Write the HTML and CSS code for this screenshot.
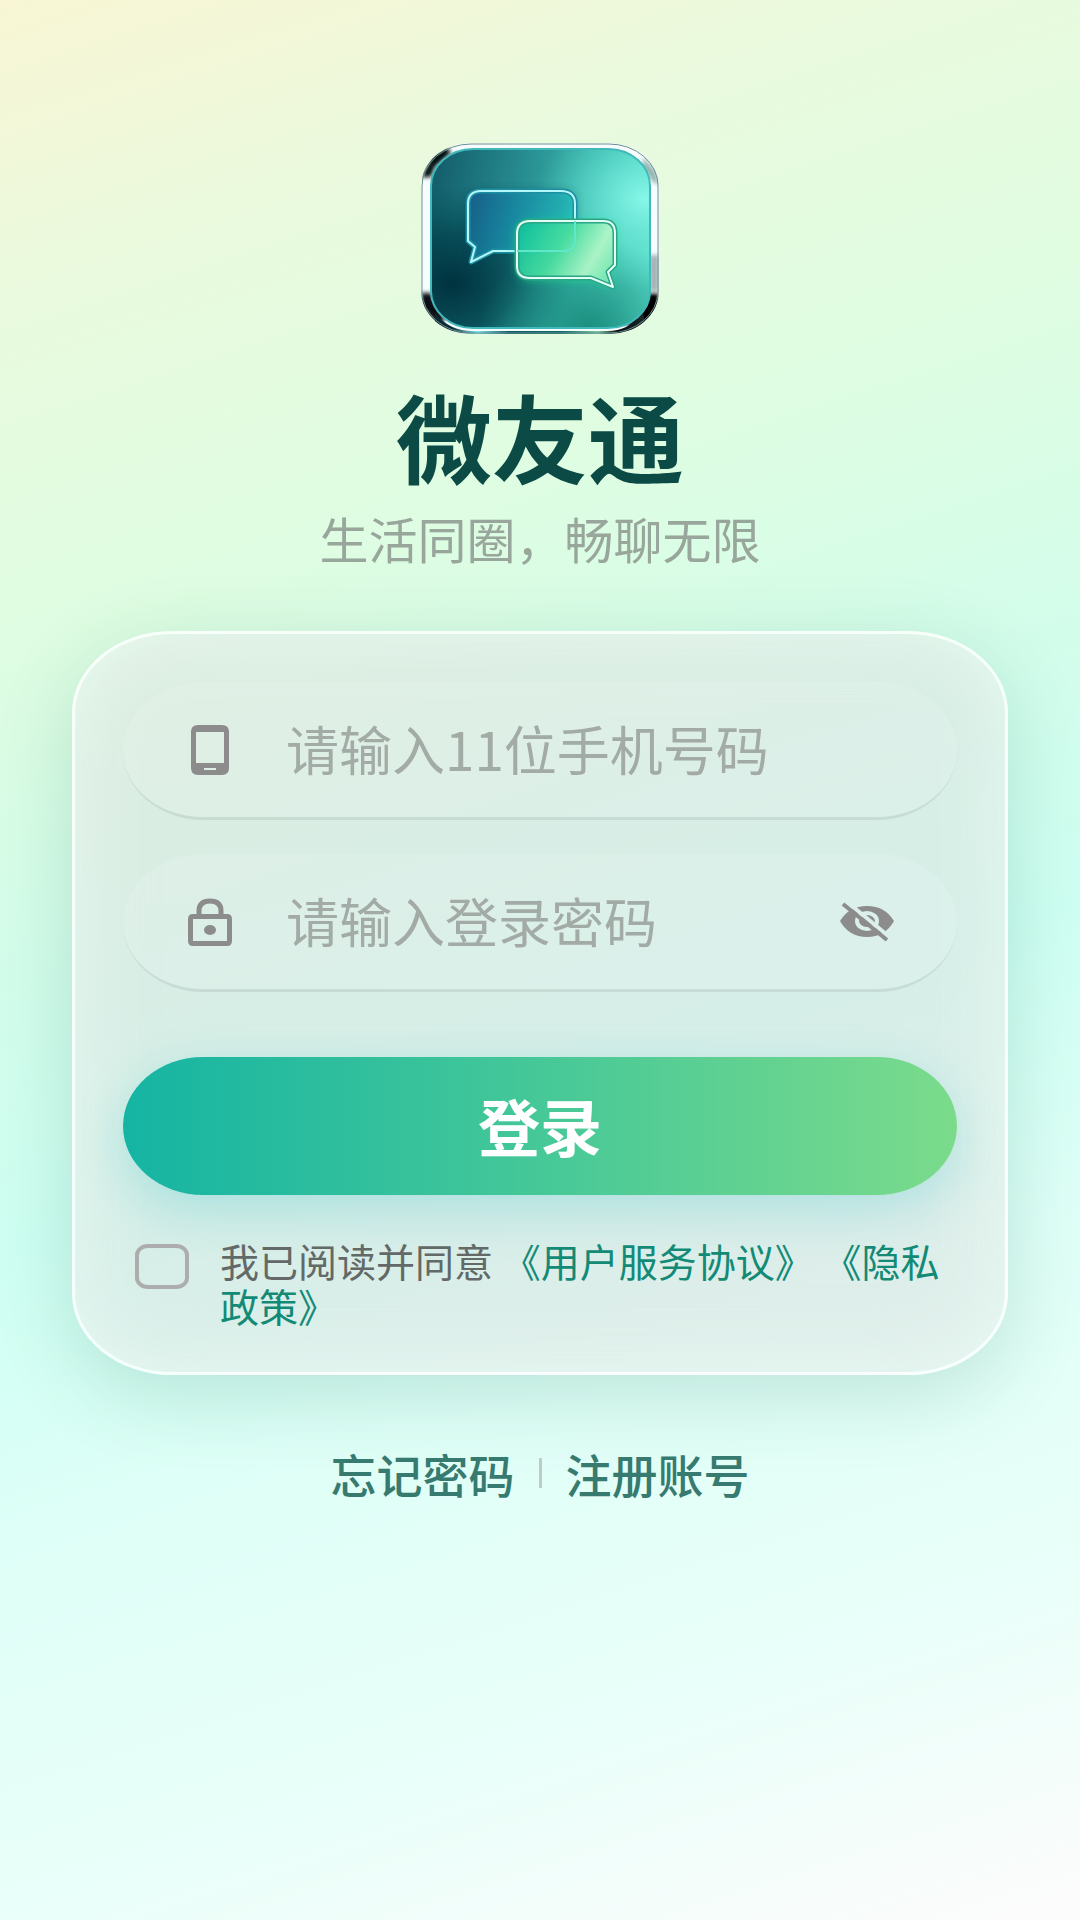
FILE: index.html
```html
<!DOCTYPE html>
<html lang="zh-CN">
<head>
<meta charset="utf-8">
<meta name="viewport" content="width=device-width, initial-scale=1">
<title>微友通</title>
<link rel="stylesheet" href="styles.css">
</head>
<body>
<main class="page">
  <header class="brand">
    <svg class="logo" viewBox="0 0 238 191" role="img" aria-label="微友通">
      <defs>
        <linearGradient id="panel" x1="0" y1="0.35" x2="1" y2="0.5">
          <stop offset="0" stop-color="#14606c"/>
          <stop offset="0.35" stop-color="#25898e"/>
          <stop offset="0.7" stop-color="#3db8ad"/>
          <stop offset="1" stop-color="#5adcc9"/>
        </linearGradient>
        <radialGradient id="dark" cx="0.1" cy="0.75" r="0.55">
          <stop offset="0" stop-color="#00323f"/>
          <stop offset="0.5" stop-color="#003f4a" stop-opacity="0.7"/>
          <stop offset="1" stop-color="#00525a" stop-opacity="0"/>
        </radialGradient>
        <radialGradient id="shine" cx="0.98" cy="0.28" r="0.5">
          <stop offset="0" stop-color="#86f7e9"/>
          <stop offset="1" stop-color="#5ae0cf" stop-opacity="0"/>
        </radialGradient>
        <radialGradient id="low" cx="0.72" cy="1" r="0.5">
          <stop offset="0" stop-color="#1b8f80"/>
          <stop offset="1" stop-color="#1b8f80" stop-opacity="0"/>
        </radialGradient>
        <linearGradient id="blue" x1="0" y1="0" x2="1" y2="0.3">
          <stop offset="0" stop-color="#1c5f94"/>
          <stop offset="0.45" stop-color="#1b93b0"/>
          <stop offset="1" stop-color="#27cfc6"/>
        </linearGradient>
        <linearGradient id="green" x1="0" y1="0.2" x2="1" y2="0.6">
          <stop offset="0" stop-color="#0fbf9f"/>
          <stop offset="0.45" stop-color="#4fdda2"/>
          <stop offset="0.8" stop-color="#c0f7ce"/>
          <stop offset="1" stop-color="#8aebb8"/>
        </linearGradient>
        <linearGradient id="bottomEdge" x1="0" x2="1">
          <stop offset="0.08" stop-color="#0a2a33"/>
          <stop offset="0.2" stop-color="#7fe9ee"/>
          <stop offset="0.35" stop-color="#0d5a62"/>
          <stop offset="0.6" stop-color="#0e6a66"/>
          <stop offset="0.77" stop-color="#7fcaa0"/>
          <stop offset="0.86" stop-color="#050b0c"/>
          <stop offset="1" stop-color="#202c2c"/>
        </linearGradient>
        <clipPath id="frame"><rect width="238" height="191" rx="50" ry="43"/></clipPath>
        <filter id="soft" x="-30%" y="-30%" width="160%" height="160%"><feGaussianBlur stdDeviation="2"/></filter>
        <filter id="glow" x="-30%" y="-30%" width="160%" height="160%"><feGaussianBlur stdDeviation="5"/></filter>
      </defs>
      <g clip-path="url(#frame)">
        <rect width="238" height="191" fill="#f7fdfe"/>
        <g filter="url(#soft)">
          <path d="M0 34 12 12 26 4 30 10 14 24 10 34Z" fill="#06110f"/>
          <path d="M222 14 234 28 238 42 231 38 222 24Z" fill="#8fb0ac"/>
          <path d="M228 112h10v36h-10z" fill="#a7b3b6"/>
          <path d="M0 150h10l14 26-6 8-18-20z" fill="#0a1112"/>
          <path d="M238 150h-10l-22 32 6 9 26-20z" fill="#020606"/>
        </g>
        <path d="M14 170Q28 188 52 188H186Q208 188 222 170L226 191H14Z" fill="url(#bottomEdge)"/>
      </g>
      <rect x="1" y="1" width="236" height="189" rx="49" ry="42" fill="none" stroke="#6c8f91" stroke-width="1"/>
      <g>
        <rect x="10" y="6" width="219" height="179" rx="42" ry="37" fill="url(#panel)"/>
        <rect x="10" y="6" width="219" height="179" rx="42" ry="37" fill="url(#dark)"/>
        <rect x="10" y="6" width="219" height="179" rx="42" ry="37" fill="url(#low)"/>
        <rect x="10" y="6" width="219" height="179" rx="42" ry="37" fill="url(#shine)"/>
        <rect x="10" y="6" width="219" height="179" rx="42" ry="37" fill="none" stroke="#41b9bb" stroke-width="2"/>
      </g>
      <path d="M60 48H140Q154 48 154 61V96Q154 108 142 108H72L50 119 54 104 47 98V61Q47 48 60 48Z" fill="#00384d" opacity="0.5" filter="url(#glow)"/>
      <path d="M60 48H140Q154 48 154 61V96Q154 108 142 108H72L50 119 54 104 47 98V61Q47 48 60 48Z" fill="url(#blue)" fill-opacity="0.75" stroke="#1c8fa4" stroke-width="5" stroke-linejoin="round"/>
      <path d="M60 48H140Q154 48 154 61V96Q154 108 142 108H72L50 119 54 104 47 98V61Q47 48 60 48Z" fill="none" stroke="#b4f7f7" stroke-width="2" stroke-linejoin="round"/>
      <path d="M109 79H182Q194 79 194 90V122L187 129 192 144 170 137H109Q96 136 96 124V92Q96 79 109 79Z" fill="#1cf08c" opacity="0.6" filter="url(#glow)"/>
      <path d="M109 78H182Q194 78 194 90V122L187 129 192 144 170 135H109Q96 135 96 123V91Q96 78 109 78Z" fill="url(#green)" fill-opacity="0.85" stroke="#2ba588" stroke-width="5" stroke-linejoin="round"/>
      <path d="M109 78H182Q194 78 194 90V122L187 129 192 144 170 135H109Q96 135 96 123V91Q96 78 109 78Z" fill="none" stroke="#e2fff4" stroke-width="2" stroke-linejoin="round"/>
      <path d="M154 78V96Q154 108 142 108H96" fill="none" stroke="#5fe8c9" stroke-width="2"/>
    </svg>
    <h1 class="title">微友通</h1>
    <p class="slogan">生活同圈，畅聊无限</p>
  </header>

  <form class="card">
    <div class="field">
      <label class="field-icon" for="phone" aria-label="手机号码">
        <svg viewBox="0 0 44 52" aria-hidden="true"><path fill="#8c8c8c" fill-rule="evenodd" d="M10 1H34Q41 1 41 8V44Q41 51 34 51H10Q3 51 3 44V8Q3 1 10 1ZM8 8V39H36V8ZM16 44V46H28V44Z"/></svg>
      </label>
      <input class="field-input" id="phone" type="tel" placeholder="请输入11位手机号码">
    </div>
    <div class="field">
      <label class="field-icon" for="password" aria-label="登录密码">
        <svg viewBox="0 0 44 52" aria-hidden="true">
          <path fill="none" stroke="#8c8c8c" stroke-width="5" d="M11 20V15Q11 5 22 5T33 15V20"/>
          <path fill="#8c8c8c" fill-rule="evenodd" d="M5 18H39Q44 18 44 23V45Q44 50 39 50H5Q0 50 0 45V23Q0 18 5 18ZM5 23V45H39V23Z"/>
          <ellipse cx="22" cy="34" rx="6" ry="5" fill="#8c8c8c"/>
        </svg>
      </label>
      <input class="field-input" id="password" type="password" placeholder="请输入登录密码">
      <button class="eye" type="button" aria-label="显示密码">
        <svg viewBox="19 23 56 40" aria-hidden="true">
          <mask id="eyeCut" maskUnits="userSpaceOnUse" x="19" y="23" width="56" height="40">
            <path fill="#fff" d="M20 42Q29 27 47 27T74 42Q65 58 47 58T20 42Z"/>
            <ellipse cx="47" cy="42" rx="10" ry="8" fill="none" stroke="#000" stroke-width="4"/>
            <path stroke="#000" stroke-width="4" d="M26 22 72 60"/>
          </mask>
          <path fill="#8c8c8c" mask="url(#eyeCut)" d="M19 23H75V63H19Z"/>
          <path stroke="#8c8c8c" stroke-width="4" d="M23 25 67 61"/>
        </svg>
      </button>
    </div>
    <button class="submit" type="submit">登录</button>
    <div class="agreement">
      <input class="agree-box" id="agree" type="checkbox">
      <p class="agree-text"><label for="agree">我已阅读并同意</label> <a href="#terms">《用户服务协议》</a> <a href="#privacy">《隐私政策》</a></p>
    </div>
  </form>

  <nav class="links">
    <a href="#forgot">忘记密码</a>
    <span class="divider"></span>
    <a href="#register">注册账号</a>
  </nav>
</main>
</body>
</html>
```
FILE: styles.css
```css
* {
  box-sizing: border-box;
}

body {
  margin: 0;
  font-family: "Noto Sans CJK SC", sans-serif;
}

.page {
  display: flex;
  flex-direction: column;
  align-items: center;
  min-height: 100vh;
  padding: 143px 72px 60px;
  background: linear-gradient(162deg, #f8f6d4 0%, #e9fade 14%, #defde2 29%, #d3fdeb 43%, #cefff2 55%, #defff7 68%, #e9fff9 84%, #fcfcfc 99%);
}

.brand {
  display: flex;
  flex-direction: column;
  align-items: center;
}

.logo {
  display: block;
  width: 238px;
  height: 191px;
}

.title {
  margin: 45px 0 0;
  font-size: 96px;
  line-height: 112px;
  font-weight: 700;
  color: #0c4a46;
}

.slogan {
  margin: 17px 0 0;
  font-size: 49px;
  line-height: 60px;
  color: #98a69c;
}

.card {
  display: flex;
  flex-direction: column;
  gap: 34px;
  width: 100%;
  margin-top: 63px;
  padding: 48px 48px 42px;
  border: 3px solid rgba(255, 255, 255, 0.8);
  border-radius: 100px / 82px;
  background: rgba(222, 222, 222, 0.5);
  background-clip: padding-box;
  box-shadow: 0 20px 80px rgba(0, 90, 70, 0.16), inset 0 0 80px rgba(238, 255, 246, 0.7);
}

.field {
  display: flex;
  align-items: center;
  height: 138px;
  padding: 0 62px 0 65px;
  border-bottom: 3px solid rgba(150, 175, 165, 0.3);
  border-radius: 80px / 69px;
  background: rgba(255, 255, 255, 0.12);
}

.field-icon svg {
  display: block;
  width: 44px;
  height: 52px;
}

.field-input {
  flex: 1;
  min-width: 0;
  height: 80px;
  margin-left: 54px;
  padding: 0 0 4px;
  border: 0;
  outline: 0;
  background: none;
  font-family: inherit;
  font-size: 53px;
  color: #333;
}

.field-input::placeholder {
  color: #a3aba7;
  opacity: 1;
}

.eye {
  padding: 0;
  border: 0;
  background: none;
}

.eye svg {
  display: block;
  width: 56px;
  height: 40px;
}

.submit {
  height: 138px;
  margin-top: 31px;
  padding: 0 0 2px;
  border: 0;
  border-radius: 80px / 69px;
  background: linear-gradient(90deg, #15b4a3, #46c898 50%, #7bdb8b);
  box-shadow: 0 16px 50px rgba(20, 180, 190, 0.22);
  font-family: inherit;
  font-size: 62px;
  font-weight: 700;
  line-height: 80px;
  color: #fff;
}

.agreement {
  display: flex;
  align-items: flex-start;
  gap: 31px;
  margin-top: 9px;
  padding-left: 12px;
}

.agree-box {
  appearance: none;
  flex: none;
  width: 54px;
  height: 45px;
  margin: 6px 0 0;
  border: 4px solid #adadad;
  border-radius: 13px / 11px;
}

.agree-text {
  margin: 0 0 2px;
  font-size: 39px;
  line-height: 45px;
  color: #626966;
}

.agree-text a {
  color: #128a76;
  text-decoration: none;
}

.links {
  display: flex;
  align-items: center;
  gap: 24px;
  margin-top: 68px;
  font-size: 46px;
  line-height: 60px;
  font-weight: 500;
}

.links a {
  color: #377a70;
  text-decoration: none;
}

.divider {
  width: 3px;
  height: 30px;
  background: #c0cbc6;
}
```
